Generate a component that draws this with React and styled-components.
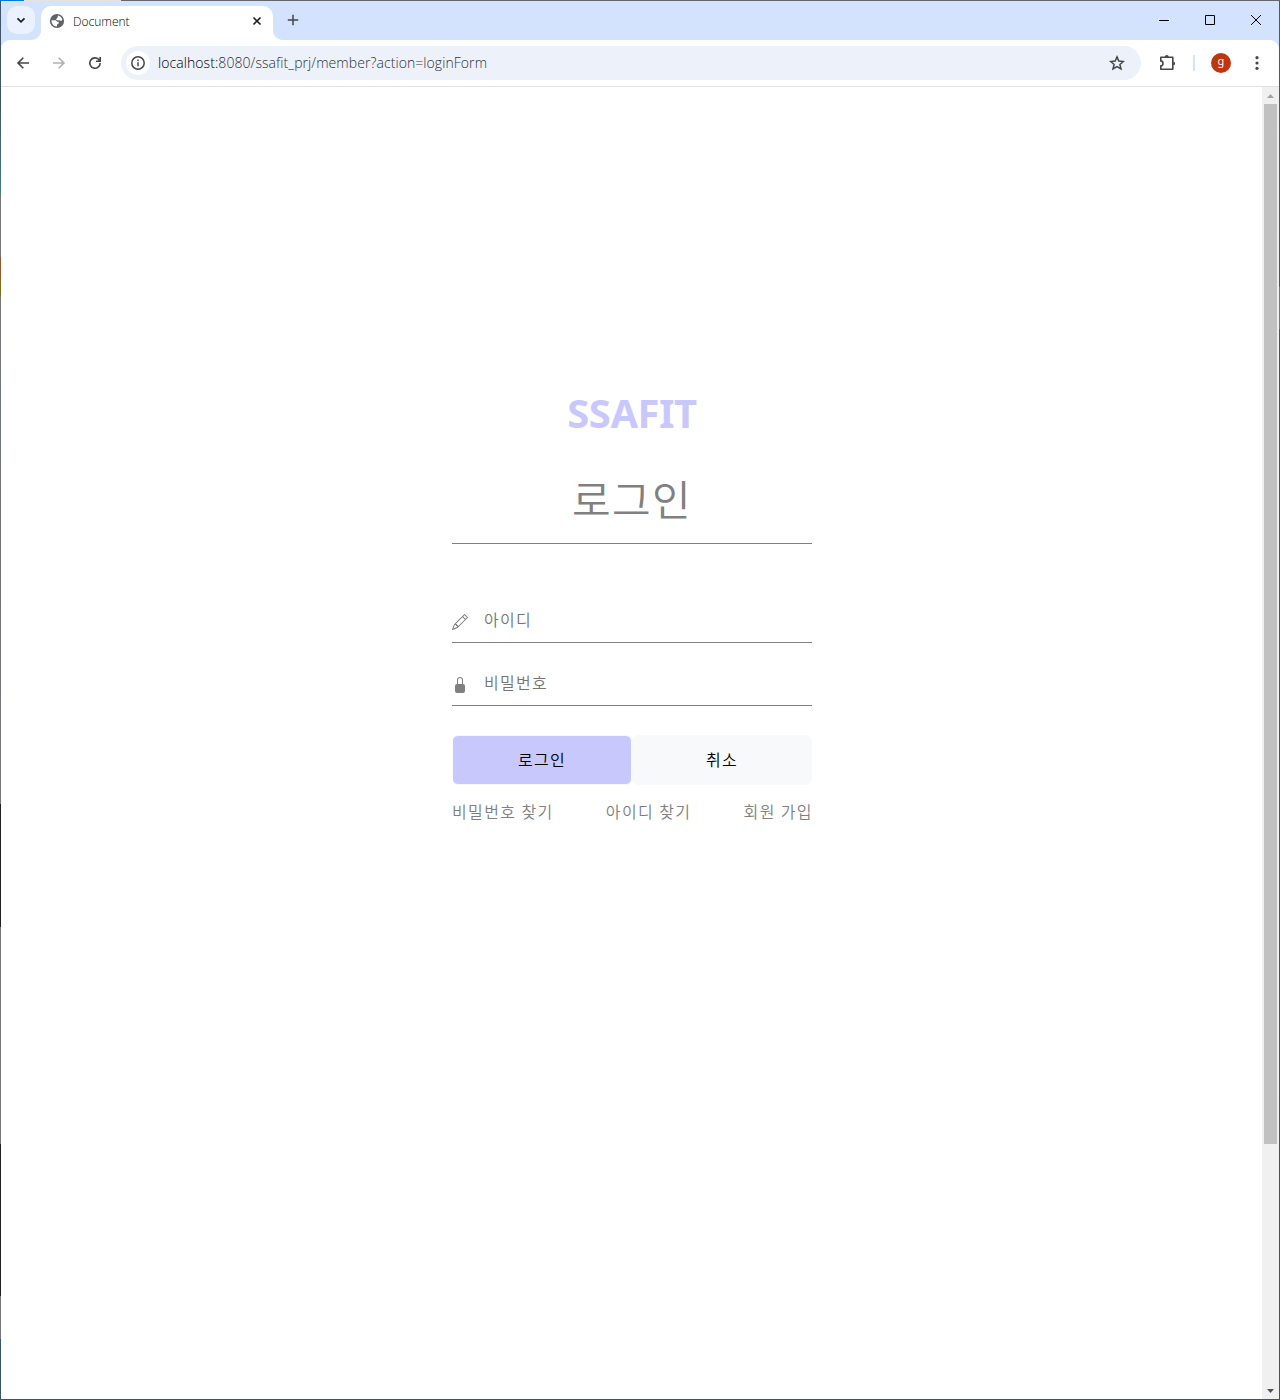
import React from "react";
import styled, { createGlobalStyle } from "styled-components";

const latin = '"Open Sans", "Noto Sans", "Noto Sans CJK KR", sans-serif';
const korean = '"Noto Sans CJK KR", "Open Sans", sans-serif';

const GlobalStyle = createGlobalStyle`
  * { box-sizing: border-box; }
  body { margin: 0; background: #fff; }
  button, input { font: inherit; }
`;

const Window = styled.div`
  width: 1280px;
  height: 1400px;
  display: grid;
  grid-template-columns: 1px 1278px 1px;
  grid-template-rows: 1px 1398px 1px;
  background: #3d5566;
  overflow: hidden;
  font-family: ${latin};
`;

const TopEdge = styled.div`
  grid-column: 1 / 4;
  background: linear-gradient(to right, #0078d7 24px, #e3e3e3 24px, #e3e3e3 121px, #63656f 121px);
`;

const LeftEdge = styled.div`
  grid-row: 2;
  grid-column: 1;
  background: linear-gradient(to bottom, #3d5566 100px, #47788c 194px, #777 194px, #777 256px, #95552f 256px,
    #95552f 274px, #806c1e 280px, #806c1e 295px, #777 295px, #70757f 400px, #70727c 560px, #777 803px,
    #222 803px, #222 926px, #777 926px, #777 1143px, #222 1143px, #222 1295px, #777 1295px, #777 1338px,
    #34566b 1338px);
`;

const RightEdge = styled.div`
  grid-row: 2;
  grid-column: 3;
  background: linear-gradient(to bottom, #3f6068 85px, #4a5560 286px, #777 286px, #777 328px, #4a5560 328px,
    #4a5560 1098px, #3d5566 1098px);
`;

const Browser = styled.div`
  grid-row: 2;
  grid-column: 2;
  display: flex;
  flex-direction: column;
  background: #d3e2fd;
`;

const TabStrip = styled.div`
  height: 39px;
  flex: none;
  display: flex;
  align-items: flex-start;
`;

const TabSearch = styled.button`
  width: 28px;
  height: 28px;
  margin: 5px 6px 0;
  padding: 0;
  border: 0;
  border-radius: 10px;
  background: #ebf1fe;
  display: grid;
  place-items: center;
`;

const Tab = styled.div`
  position: relative;
  width: 232px;
  height: 34px;
  margin-top: 5px;
  padding: 0 10px 5px 8px;
  border-radius: 10px 10px 0 0;
  background: #fff;
  display: flex;
  align-items: center;
  &::before, &::after {
    content: "";
    position: absolute;
    bottom: 0;
    width: 10px;
    height: 10px;
  }
  &::before {
    left: -10px;
    background: radial-gradient(circle at 0 0, transparent 9.5px, #fff 10.5px);
  }
  &::after {
    right: -10px;
    background: radial-gradient(circle at 100% 0, transparent 9.5px, #fff 10.5px);
  }
`;

const TabTitle = styled.span`
  margin-left: 8px;
  padding-top: 2px;
  flex: 1;
  font-size: 12px;
  font-weight: 300;
  line-height: 16px;
  color: #000;
`;

const NewTab = styled.button`
  width: 28px;
  height: 28px;
  margin: 5px 0 0 6px;
  padding: 0;
  border: 0;
  background: none;
  display: grid;
  place-items: center;
`;

const WindowControls = styled.div`
  margin-left: auto;
  display: flex;
`;

const Control = styled.button`
  width: 46px;
  height: 38px;
  padding: 0;
  border: 0;
  background: none;
  display: grid;
  place-items: center;
`;

const Toolbar = styled.div`
  height: 47px;
  flex: none;
  padding-left: 4px;
  border-bottom: 1px solid #dfe1e5;
  border-radius: 9px 9px 0 0;
  background: #fff;
  display: flex;
  align-items: center;
`;

const IconButton = styled.button`
  width: ${(p) => p.$width || 36}px;
  height: 34px;
  flex: none;
  padding: 0;
  border: 0;
  background: none;
  display: grid;
  place-items: center;
`;

const AddressBar = styled.div`
  width: 1020px;
  height: 34px;
  flex: none;
  margin-left: 8px;
  padding: 0 6px 0 5px;
  border-radius: 17px;
  background: #ecf1fa;
  display: flex;
  align-items: center;
`;

const SiteInfo = styled.span`
  width: 24px;
  height: 24px;
  border-radius: 50%;
  background: #fff;
  display: grid;
  place-items: center;
`;

const Url = styled.span`
  margin-left: 8px;
  flex: 1;
  font-size: 14px;
  font-weight: 300;
  line-height: 20px;
  letter-spacing: 0.07px;
  color: #303236;
`;

const Host = styled.span`
  color: #000;
`;

const Divider = styled.span`
  width: 2px;
  height: 16px;
  background: #d3e2fd;
`;

const Avatar = styled.span`
  width: 20px;
  height: 20px;
  margin: 0 8px 0 16px;
  border-radius: 50%;
  background: #bf360c;
  color: #fff;
  font: 11px/16px "Noto Sans", sans-serif;
  text-align: center;
`;

const Viewport = styled.div`
  flex: 1;
  display: flex;
  background: #fff;
`;

const Page = styled.main`
  width: 1261px;
  display: flex;
  flex-direction: column;
  align-items: center;
  font-family: ${korean};
  color: gray;
`;

const Scrollbar = styled.div`
  width: 17px;
  background: #f0f0f0;
  display: flex;
  flex-direction: column;
  align-items: center;
`;

const ScrollArrow = styled.span`
  height: 17px;
  width: 17px;
  display: grid;
  place-items: center;
`;

const Thumb = styled.div`
  width: 13px;
  height: 1040px;
  background: #c1c1c1;
  margin-bottom: auto;
`;

const Form = styled.form`
  width: 360px;
  margin: 296px 0 0 1px;
`;

const Logo = styled.h1`
  margin: 0;
  height: 60px;
  font: 700 40px/60px "Noto Sans", sans-serif;
  letter-spacing: -0.5px;
  text-align: center;
  color: #c9c8fd;
`;

const Title = styled.h2`
  margin: 20px 0 0;
  height: 81px;
  border-bottom: 1px solid gray;
  font-size: 42px;
  font-weight: 350;
  line-height: 70px;
  letter-spacing: 1.4px;
  text-align: center;
`;

const Field = styled.label`
  height: 48px;
  margin-top: ${(p) => p.$gap}px;
  border-bottom: 1px solid gray;
  display: flex;
  align-items: flex-start;
`;

const FieldIcon = styled.svg`
  width: 16px;
  height: 16px;
  margin: 19px 16px 0 0;
  flex: none;
  fill: gray;
`;

const Input = styled.input`
  width: 320px;
  height: 47px;
  padding: 1px 0 0;
  border: 0;
  outline: 0;
  background: none;
  font-weight: 350;
  font-size: 16px;
  letter-spacing: 1.28px;
  &::placeholder { color: #757575; opacity: 1; }
`;

const Buttons = styled.div`
  margin-top: 29px;
  display: flex;
`;

const Button = styled.button`
  width: 180px;
  height: 50px;
  padding: 0 0 2px;
  border: 1px solid #f8f9fa;
  border-radius: 6px;
  background: ${(p) => (p.$primary ? "#c9c8fd" : "#f8f9fb")};
  color: #000;
  font-size: 16px;
  font-weight: 350;
  letter-spacing: 1.28px;
`;

const Links = styled.nav`
  margin-top: 14px;
  display: flex;
  justify-content: space-between;
  font-size: 16px;
  line-height: 24px;
  font-weight: 350;
  letter-spacing: 1.4px;
`;

const Link = styled.a`
  color: gray;
  &:last-child { margin-right: -1px; }
`;

const Stroke = ({ size = 16, color = "#454746", width = 1.6, children }) => (
  <svg width={size} height={size} viewBox={`0 0 ${size} ${size}`} fill="none" stroke={color} strokeWidth={width}>
    {children}
  </svg>
);

export default function App() {
  return (
    <>
      <GlobalStyle />
      <Window>
        <TopEdge />
        <LeftEdge />
        <Browser>
          <TabStrip>
            <TabSearch type="button"><Stroke color="#1f1f1f" width={1.8}><path d="M4.5 6.3 8 9.8l3.5-3.5" /></Stroke></TabSearch>
            <Tab>
              <svg width="16" height="16" viewBox="0 0 16 16">
                <circle cx="8" cy="8" r="7.1" fill="#5f6368" />
                <path d="M9 2.5c2.2.4 4 2 4.4 4.3l-1.2 1.1-1.8-.6H7.8L7 6.2l1.4-1.4z" fill="#fff" />
                <path d="M2.5 7.3h4l1.8 1.5h1.4v1.7L8 11.4v2.1C4.9 13.6 2.3 11 2.5 7.3z" fill="#fff" />
              </svg>
              <TabTitle>Document</TabTitle>
              <Stroke size={12} color="#1f1f1f"><path d="m2.5 2.5 7 7m0-7-7 7" /></Stroke>
            </Tab>
            <NewTab type="button"><Stroke size={12} width={1.5}><path d="M6 .8v10.4M.8 6h10.4" /></Stroke></NewTab>
            <WindowControls>
              <Control type="button"><Stroke size={10} color="#000" width={1}><path d="M0 5.5h10" /></Stroke></Control>
              <Control type="button"><Stroke size={10} color="#000" width={1}><path d="M.5.5h9v9h-9z" /></Stroke></Control>
              <Control type="button"><Stroke size={10} color="#000" width={1}><path d="m0 0 10 10M10 0 0 10" /></Stroke></Control>
            </WindowControls>
          </TabStrip>
          <Toolbar>
            <IconButton type="button"><Stroke><path d="M14 8H3m5.3-5.3L3 8l5.3 5.3" /></Stroke></IconButton>
            <IconButton type="button"><Stroke color="#b1b1b1"><path d="M2 8h11M7.7 2.7 13 8l-5.3 5.3" /></Stroke></IconButton>
            <IconButton type="button"><Stroke><path d="M13.2 8A5.2 5.2 0 1 1 11.8 4.5l1.4 1.6M13.2 2v4.2H9" /></Stroke></IconButton>
            <AddressBar>
              <SiteInfo><Stroke width={1.5}><circle cx="8" cy="8" r="6.2" /><path d="M8 7.2v4M8 4.6v1.5" /></Stroke></SiteInfo>
              <Url><Host>localhost:</Host>8080/ssafit_prj/member?action=loginForm</Url>
              <IconButton type="button"><Stroke width={1.5}><path d="m8 1.9 1.8 4.2 4.6.4-3.5 3 1.1 4.5L8 11.6 4 14l1.1-4.5-3.5-3 4.6-.4z" /></Stroke></IconButton>
            </AddressBar>
            <IconButton type="button" $width={52}>
              <Stroke size={18}>
                <path d="M2.8 3.3h12v12h-12v-3.4c1.4-.2 2.2-1.2 2.2-2.5s-.8-2.3-2.2-2.5z" strokeLinejoin="round" />
                <path d="M6.9 3a1.9 1.9 0 0 1 3.8 0zM15.2 7.5a1.9 1.9 0 0 1 0 3.8z" fill="#454746" stroke="none" />
              </Stroke>
            </IconButton>
            <Divider />
            <Avatar>g</Avatar>
            <IconButton type="button"><svg width="16" height="16" viewBox="0 0 16 16" fill="#454746"><circle cx="8" cy="2.7" r="1.6" /><circle cx="8" cy="8" r="1.6" /><circle cx="8" cy="13.3" r="1.6" /></svg></IconButton>
          </Toolbar>
          <Viewport>
            <Page>
              <Form>
                <Logo>SSAFIT</Logo>
                <Title>로그인</Title>
                <Field $gap={51}>
                  <FieldIcon viewBox="0 0 16 16">
                    <path d="M12.146.146a.5.5 0 0 1 .708 0l3 3a.5.5 0 0 1 0 .708l-10 10a.5.5 0 0 1-.168.11l-5 2a.5.5 0 0 1-.65-.65l2-5a.5.5 0 0 1 .11-.168zM11.207 2.5 13.5 4.793 14.793 3.5 12.5 1.207zm1.586 3L10.5 3.207 4 9.707V10h.5a.5.5 0 0 1 .5.5v.5h.5a.5.5 0 0 1 .5.5v.5h.293zm-9.761 5.175-.106.106-1.528 3.821 3.821-1.528.106-.106A.5.5 0 0 1 5 12.5V12h-.5a.5.5 0 0 1-.5-.5V11h-.5a.5.5 0 0 1-.468-.325" />
                  </FieldIcon>
                  <Input placeholder="아이디" />
                </Field>
                <Field $gap={15}>
                  <FieldIcon viewBox="0 0 16 16">
                    <path d="M8 1a2 2 0 0 1 2 2v4H6V3a2 2 0 0 1 2-2m3 6V3a3 3 0 0 0-6 0v4a2 2 0 0 0-2 2v5a2 2 0 0 0 2 2h6a2 2 0 0 0 2-2V9a2 2 0 0 0-2-2" />
                  </FieldIcon>
                  <Input type="password" placeholder="비밀번호" />
                </Field>
                <Buttons>
                  <Button type="button" $primary>로그인</Button>
                  <Button type="button">취소</Button>
                </Buttons>
                <Links>
                  <Link>비밀번호 찾기</Link>
                  <Link>아이디 찾기</Link>
                  <Link>회원 가입</Link>
                </Links>
              </Form>
            </Page>
            <Scrollbar>
              <ScrollArrow><svg width="7" height="4" viewBox="0 0 7 4"><path d="M0 4 3.5 0 7 4z" fill="#a3a3a3" /></svg></ScrollArrow>
              <Thumb />
              <ScrollArrow><svg width="7" height="4" viewBox="0 0 7 4"><path d="M0 0h7L3.5 4z" fill="#505050" /></svg></ScrollArrow>
            </Scrollbar>
          </Viewport>
        </Browser>
        <RightEdge />
      </Window>
    </>
  );
}
